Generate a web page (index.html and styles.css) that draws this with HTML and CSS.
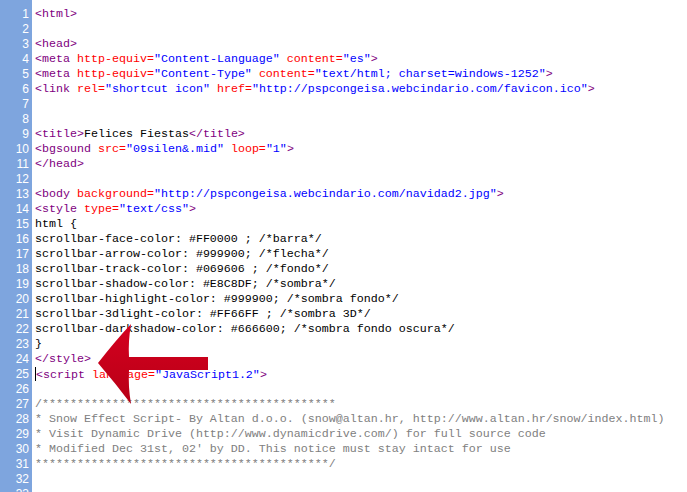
FILE: index.html
```html
<!DOCTYPE html>
<html lang="es">
<head>
    <meta charset="UTF-8">
    <title>Felices Fiestas - source</title>
    <link rel="stylesheet" href="styles.css">
</head>
<body>
    <div class="editor">
        <div class="gutter">
            <div>1</div><div>2</div><div>3</div><div>4</div><div>5</div><div>6</div><div>7</div><div>8</div>
            <div>9</div><div>10</div><div>11</div><div>12</div><div>13</div><div>14</div><div>15</div><div>16</div>
            <div>17</div><div>18</div><div>19</div><div>20</div><div>21</div><div>22</div><div>23</div><div>24</div>
            <div>25</div><div>26</div><div>27</div><div>28</div><div>29</div><div>30</div><div>31</div><div>32</div>
            <div>33</div>
        </div>
        <div class="code">
            <div class="line"><span class="tag">&lt;html&gt;</span></div>
            <div class="line"></div>
            <div class="line"><span class="tag">&lt;head&gt;</span></div>
            <div class="line"><span class="tag">&lt;meta</span> <span class="attr">http-equiv=</span><span class="val">"Content-Language"</span> <span class="attr">content=</span><span class="val">"es"</span><span class="tag">&gt;</span></div>
            <div class="line"><span class="tag">&lt;meta</span> <span class="attr">http-equiv=</span><span class="val">"Content-Type"</span> <span class="attr">content=</span><span class="val">"text/html; charset=windows-1252"</span><span class="tag">&gt;</span></div>
            <div class="line"><span class="tag">&lt;link</span> <span class="attr">rel=</span><span class="val">"shortcut icon"</span> <span class="attr">href=</span><span class="val">"http://pspcongeisa.webcindario.com/favicon.ico"</span><span class="tag">&gt;</span></div>
            <div class="line"></div>
            <div class="line"></div>
            <div class="line"><span class="tag">&lt;title&gt;</span>Felices Fiestas<span class="tag">&lt;/title&gt;</span></div>
            <div class="line"><span class="tag">&lt;bgsound</span> <span class="attr">src=</span><span class="val">"09silen&amp;.mid"</span> <span class="attr">loop=</span><span class="val">"1"</span><span class="tag">&gt;</span></div>
            <div class="line"><span class="tag">&lt;/head&gt;</span></div>
            <div class="line"></div>
            <div class="line"><span class="tag">&lt;body</span> <span class="attr">background=</span><span class="val">"http://pspcongeisa.webcindario.com/navidad2.jpg"</span><span class="tag">&gt;</span></div>
            <div class="line"><span class="tag">&lt;style</span> <span class="attr">type=</span><span class="val">"text/css"</span><span class="tag">&gt;</span></div>
            <div class="line">html {</div>
            <div class="line">scrollbar-face-color: #FF0000 ; /*barra*/</div>
            <div class="line">scrollbar-arrow-color: #999900; /*flecha*/</div>
            <div class="line">scrollbar-track-color: #069606 ; /*fondo*/</div>
            <div class="line">scrollbar-shadow-color: #E8C8DF; /*sombra*/</div>
            <div class="line">scrollbar-highlight-color: #999900; /*sombra fondo*/</div>
            <div class="line">scrollbar-3dlight-color: #FF66FF ; /*sombra 3D*/</div>
            <div class="line">scrollbar-darkshadow-color: #666600; /*sombra fondo oscura*/</div>
            <div class="line">}</div>
            <div class="line"><span class="tag">&lt;/style&gt;</span></div>
            <div class="line"><span class="caret"></span><span class="tag">&lt;script</span> <span class="attr">language=</span><span class="val">"JavaScript1.2"</span><span class="tag">&gt;</span></div>
            <div class="line"></div>
            <div class="line comment">/******************************************</div>
            <div class="line comment">* Snow Effect Script- By Altan d.o.o. (snow@altan.hr, http://www.altan.hr/snow/index.html)</div>
            <div class="line comment">* Visit Dynamic Drive (http://www.dynamicdrive.com/) for full source code</div>
            <div class="line comment">* Modified Dec 31st, 02' by DD. This notice must stay intact for use</div>
            <div class="line comment">******************************************/</div>
            <div class="line"></div>
            <div class="line"></div>
        </div>
    </div>

    <!-- red pointer drawn over the listing -->
    <svg class="arrow" width="687" height="492" viewBox="0 0 687 492">
        <defs>
            <linearGradient id="arrowFill" x1="0" y1="0" x2="0" y2="1">
                <stop offset="0" stop-color="#d4001f"/>
                <stop offset="1" stop-color="#b80016"/>
            </linearGradient>
        </defs>
        <path d="M98 363 Q116 340 131 324 Q128 342 129 357 L208 357 L208 370 L129 370 Q128 386 131 404 Q116 384 98 363 Z" fill="url(#arrowFill)"/>
    </svg>
</body>
</html>
```

FILE: styles.css
```css
html, body {
    margin: 0;
    padding: 0;
    height: 100%;
    overflow: hidden;
    background: #fff;
}
body {
    position: relative;
}
.editor {
    display: flex;
    height: 492px;
    overflow: hidden;
}
.gutter {
    width: 32px;
    box-sizing: border-box;
    padding: 7px 3px 0 0;
    background: #7ea5de;
    color: #fff;
    text-align: right;
    font-family: "Liberation Sans", Arial, sans-serif;
    font-size: 12px;
    line-height: 15px;
}
.gutter div {
    height: 15px;
}
.code {
    flex: 1;
    padding: 7px 0 0 3px;
    font-family: "Liberation Mono", "Courier New", monospace;
    font-size: 11.67px;
    line-height: 15px;
    color: #000;
}
.line {
    height: 15px;
    white-space: pre;
}
.tag {
    color: #800080;
}
.attr {
    color: #ff0000;
}
.val {
    color: #0000ff;
}
.comment {
    color: #808080;
}
.caret {
    display: inline-block;
    width: 0;
    height: 14px;
    border-left: 1px solid #000;
    vertical-align: -3px;
}
.arrow {
    position: absolute;
    left: 0;
    top: 0;
    pointer-events: none;
}
```
